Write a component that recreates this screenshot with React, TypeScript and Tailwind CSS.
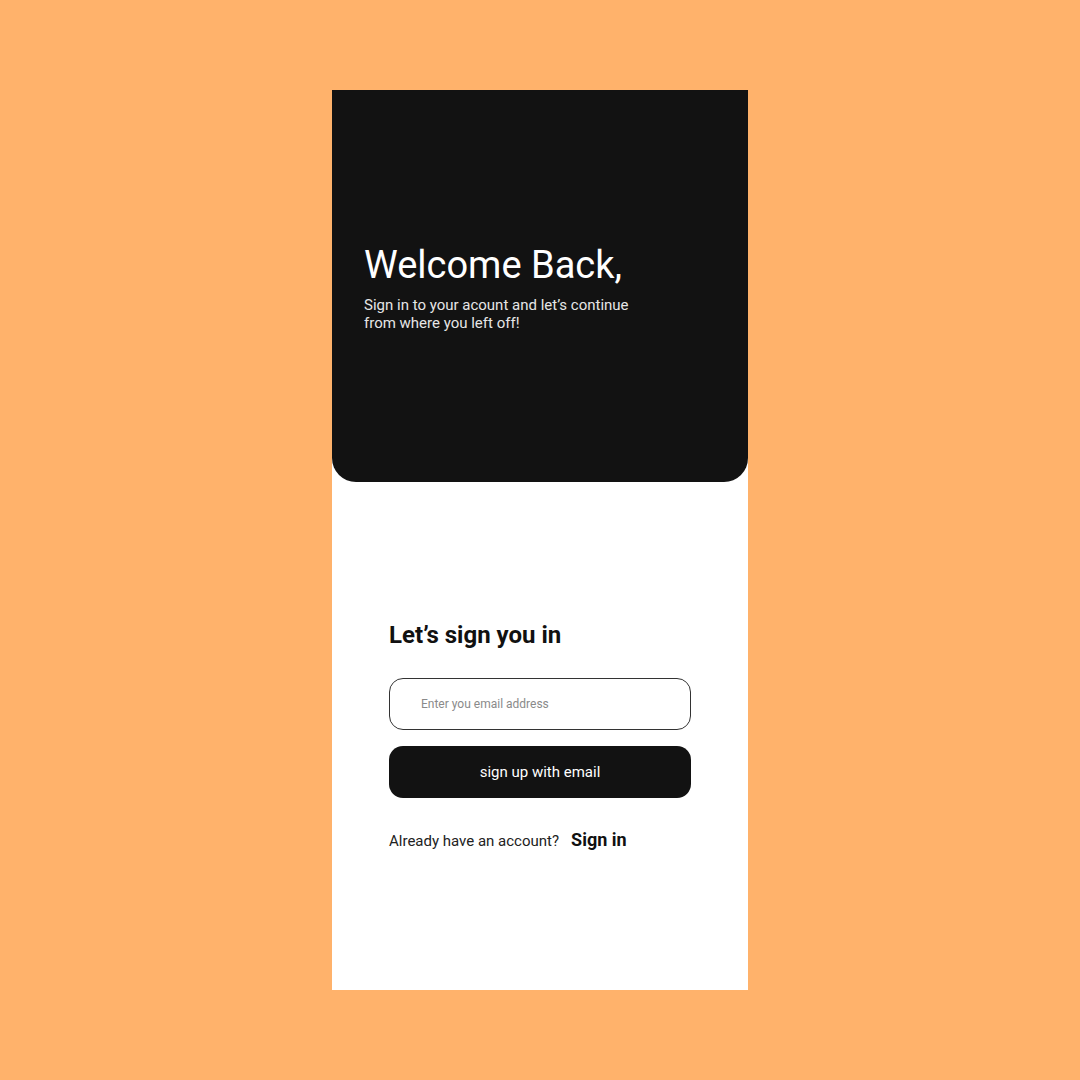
export default function App() {
    return (
        <div className="min-h-screen w-full bg-[#ffb26b] flex items-center justify-center font-['Roboto',sans-serif]">
            <div className="w-[416px] h-[900px] bg-white flex flex-col">
                {/* Header panel */}
                <div className="h-[392px] bg-[#121212] rounded-b-[24px] px-8 flex flex-col justify-center">
                    <h1 className="text-[38px] leading-[44px] text-white font-normal mt-[2px]">Welcome Back,</h1>
                    <p className="mt-[9px] text-[15px] leading-[18px] text-[#e6e6e6] w-[290px]">
                        Sign in to your acount and let’s continue from where you left off!
                    </p>
                </div>

                {/* Form */}
                <div className="px-[57px] pt-[138px]">
                    <h2 className="text-[24px] leading-[30px] font-bold text-[#111]">Let’s sign you in</h2>
                    <div className="mt-[28px] h-[52px] rounded-[14px] border border-[#333] flex items-center pl-[31px]">
                        <input
                            className="w-full outline-none text-[12px] text-[#222] placeholder:text-[#8a8a8a] bg-transparent"
                            placeholder="Enter you email address"
                        />
                    </div>
                    <button className="mt-[16px] w-full h-[52px] rounded-[14px] bg-[#121212] text-white text-[15px]">
                        sign up with email
                    </button>
                    <div className="mt-[28px] flex items-baseline gap-[12px]">
                        <span className="text-[15px] text-[#222]">Already have an account?</span>
                        <span className="text-[18px] font-bold text-[#111]">Sign in</span>
                    </div>
                </div>
            </div>
        </div>
    );
}
